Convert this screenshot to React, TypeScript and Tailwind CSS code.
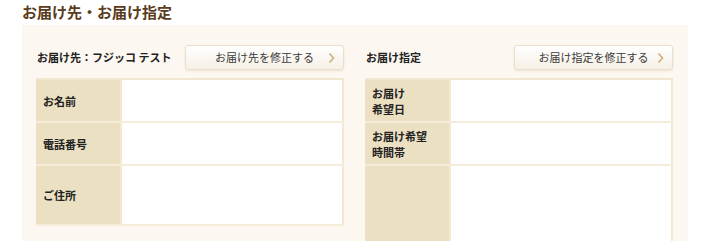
import React from "react";

type Row = { label: string[]; h: string };

const LEFT_ROWS: Row[] = [
  { label: ["お名前"], h: "h-[43px]" },
  { label: ["電話番号"], h: "h-[43px]" },
  { label: ["ご住所"], h: "h-[60px]" },
];

const RIGHT_ROWS: Row[] = [
  { label: ["お届け", "希望日"], h: "h-[43px]" },
  { label: ["お届け希望", "時間帯"], h: "h-[43px]" },
  { label: [], h: "h-[90px]" },
];

function Chevron() {
  return (
    <svg width="7" height="11" viewBox="0 0 7 11" className="absolute right-[8px] top-1/2 -translate-y-1/2">
      <polyline points="1.5,1 5.5,5.5 1.5,10" fill="none" stroke="#cfae7c" strokeWidth="1.6" />
    </svg>
  );
}

function Section({ title, button, rows }: { title: string; button: string; rows: Row[] }) {
  return (
    <div className="w-[308px]">
      <div className="flex items-center justify-between h-[25px]">
        <p className="text-[11px] font-bold text-[#222] pl-[1px]">{title}</p>
        <button className="relative w-[159px] h-[25px] rounded-[3px] border border-[#eadfca] bg-gradient-to-b from-white to-[#f6f0e5] shadow-[0_1px_2px_rgba(150,120,70,0.15)] text-[11px] text-[#3a3a3a]">
          {button}
          <Chevron />
        </button>
      </div>
      <div className="mt-[8px] border-t-2 border-[#f1e6cf]">
        {rows.map((r, i) => (
          <div key={i} className={`flex ${r.h} border-b-2 border-[#f5ecda]`}>
            <div className="w-[84px] shrink-0 bg-[#ece0c3] flex flex-col justify-center pl-[7px]">
              {r.label.map((l) => (
                <p key={l} className="text-[11px] font-bold leading-[16px] text-[#222]">
                  {l}
                </p>
              ))}
            </div>
            <div className="flex-1 bg-white border-l-2 border-r-2 border-[#f3e9d3]" />
          </div>
        ))}
      </div>
    </div>
  );
}

export default function App() {
  return (
    <div className="w-[714px] bg-white font-['Noto_Sans_CJK_JP','Noto_Sans',sans-serif]">
      <h2 className="pl-[22px] pt-[2px] h-[25px] text-[15px] leading-[20px] font-bold text-[#5a3c1e]">
        お届け先・お届け指定
      </h2>
      <div className="ml-[22px] w-[666px] bg-[#fcf7f0] pt-[20px] pb-[16px] pl-[14px] pr-[15px] flex gap-[21px] items-start">
        <Section title="お届け先：フジッコ テスト" button="お届け先を修正する" rows={LEFT_ROWS} />
        <Section title="お届け指定" button="お届け指定を修正する" rows={RIGHT_ROWS} />
      </div>
    </div>
  );
}
